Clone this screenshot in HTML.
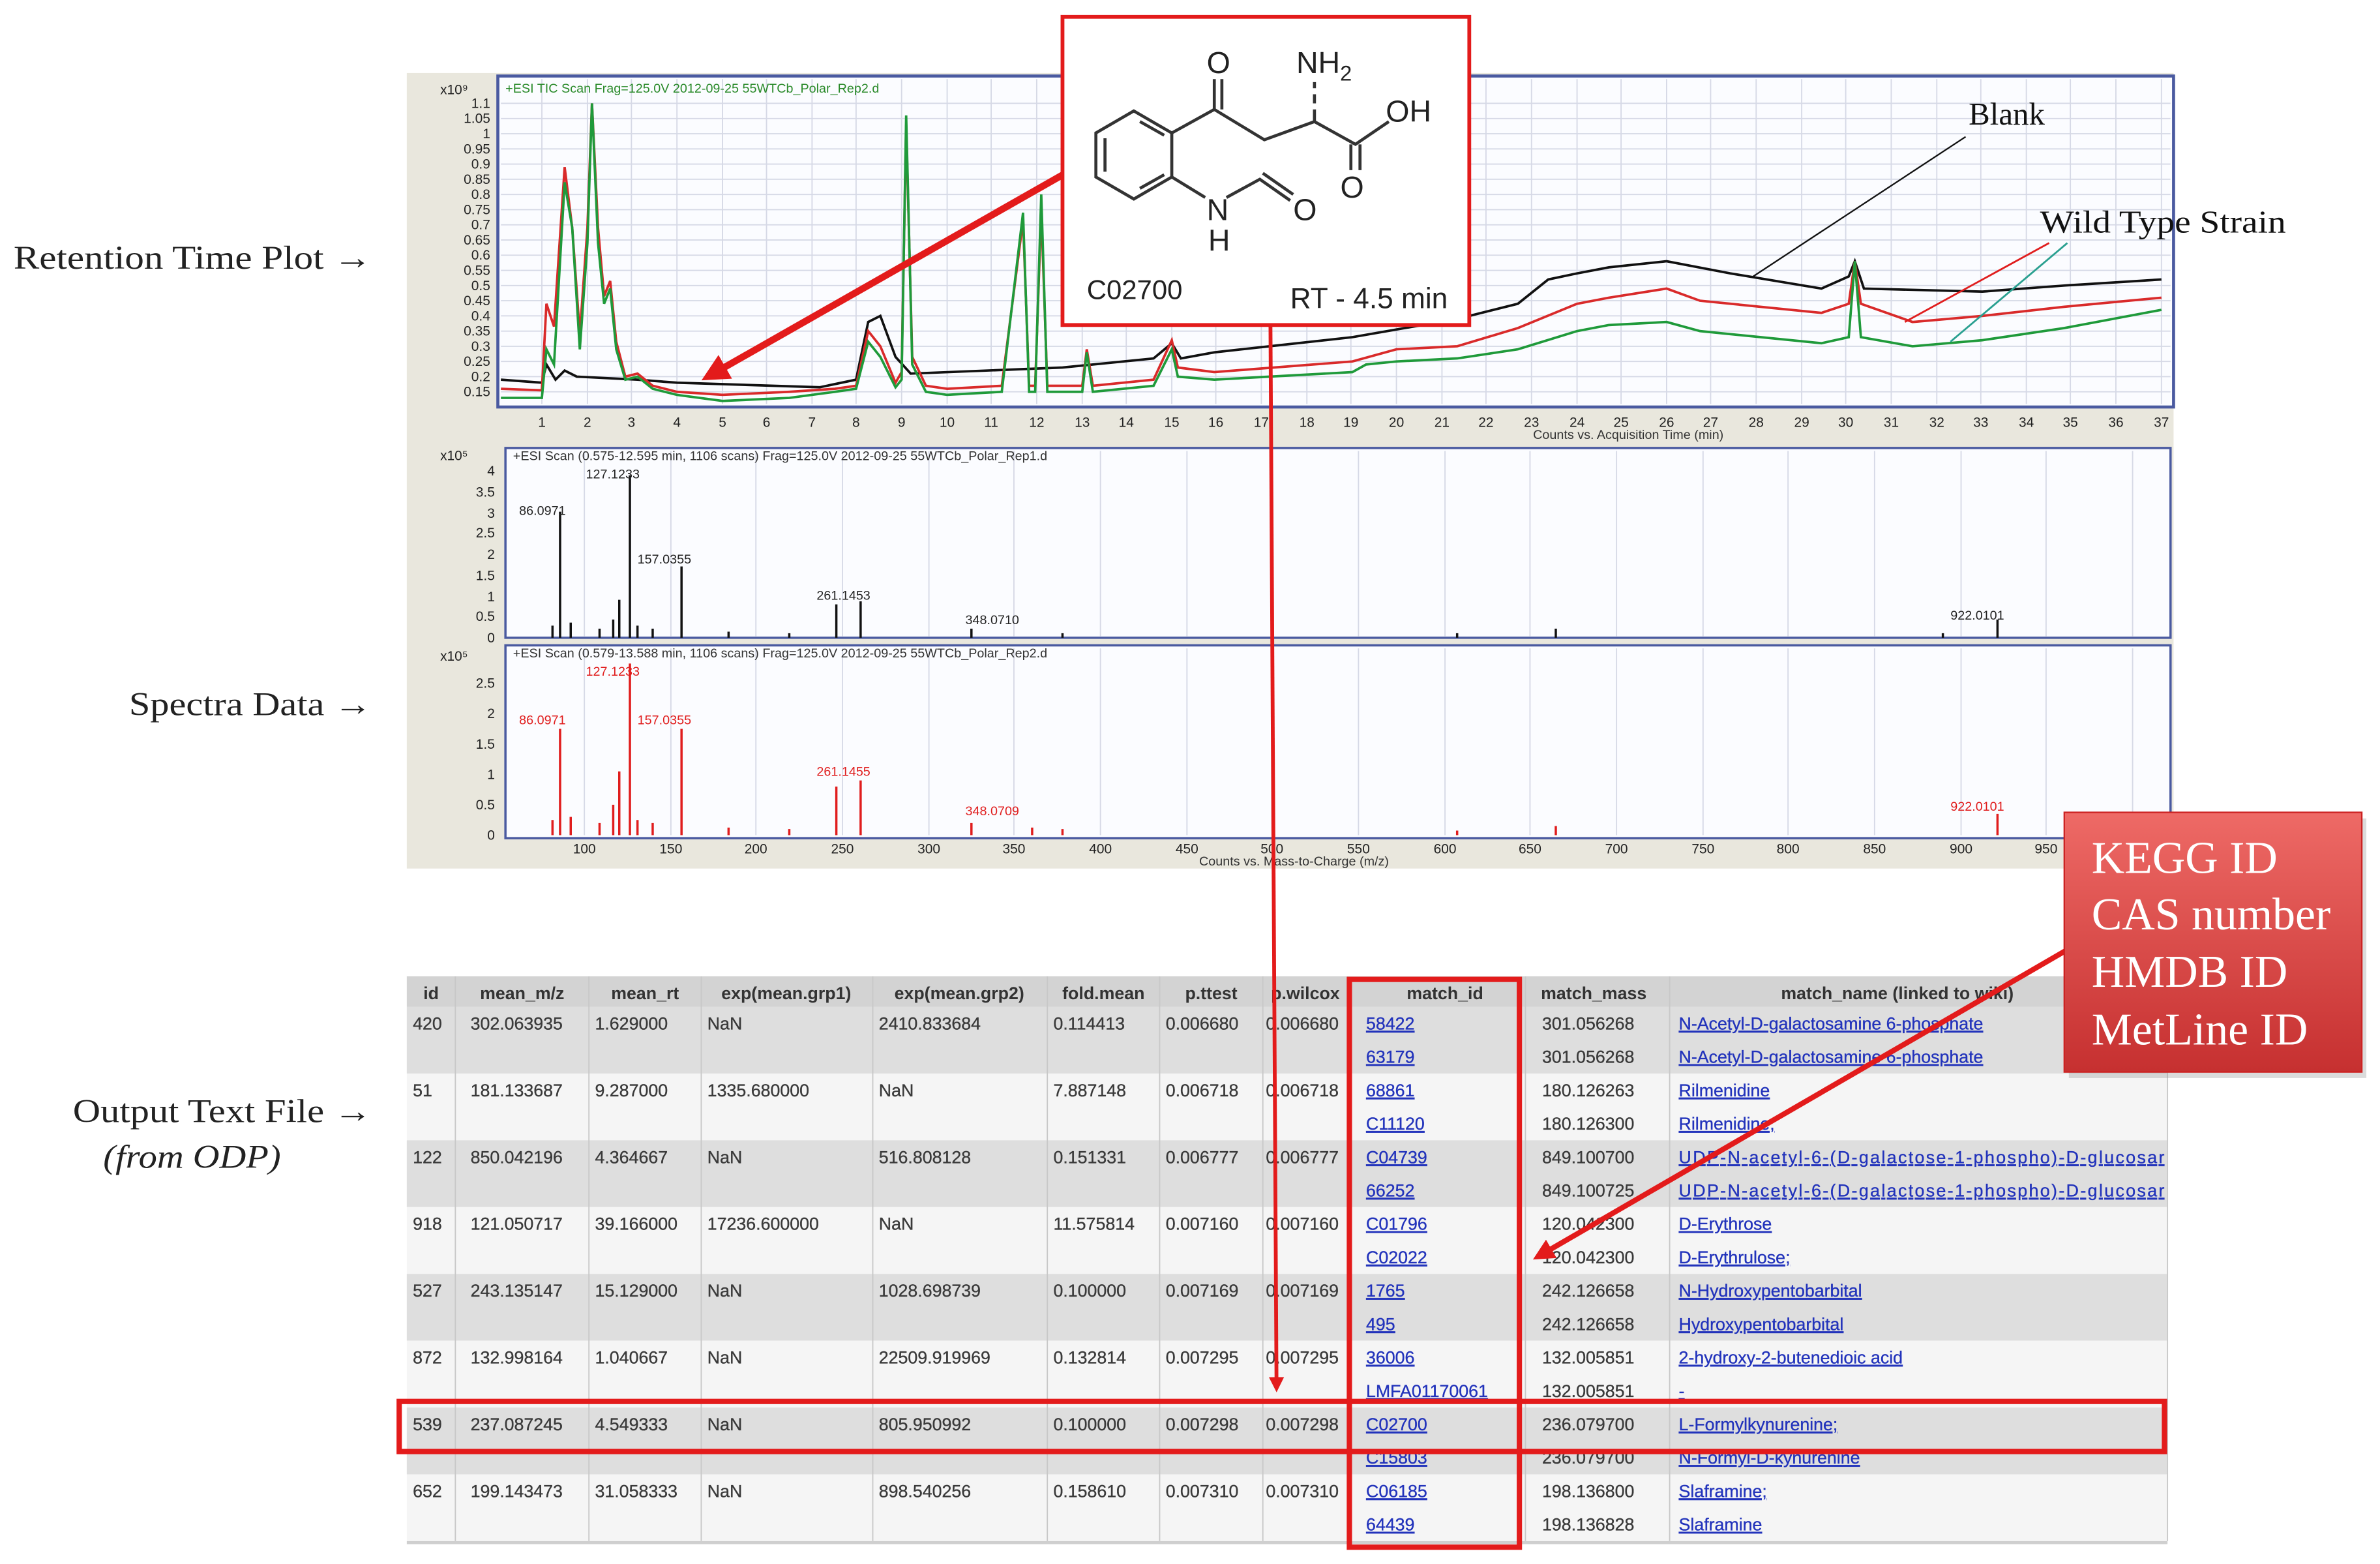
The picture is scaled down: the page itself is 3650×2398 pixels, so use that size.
<!DOCTYPE html>
<html><head><meta charset="utf-8"><style>
html,body{margin:0;padding:0;background:#fff;}
svg{display:block;}
.lab{font-family:"Liberation Serif",serif;font-size:22px;fill:#222;}
.t{font-family:"Liberation Sans",sans-serif;font-size:11.5px;fill:#3a3a3a;stroke:#3a3a3a;stroke-width:0.15px;}
.h{font-family:"Liberation Sans",sans-serif;font-size:11.5px;fill:#333;font-weight:bold;}
.a{fill:#2233bb;stroke:#2233bb;text-decoration:underline;}
.ax{font-family:"Liberation Sans",sans-serif;font-size:9px;fill:#222;}
.sm{font-family:"Liberation Sans",sans-serif;font-size:8.5px;}
.k{font-family:"Liberation Serif",serif;font-size:30px;fill:#fff;}
</style></head><body>
<svg width="3650" height="2398" viewBox="0 0 1568 1030" xmlns="http://www.w3.org/2000/svg">
<defs>
<linearGradient id="kg" x1="0" y1="0" x2="0" y2="1"><stop offset="0" stop-color="#ee6a66"/><stop offset="1" stop-color="#c63030"/></linearGradient>
<marker id="ar" markerWidth="4" markerHeight="4" refX="2" refY="2" orient="auto"><path d="M0,0 L4,2 L0,4 z" fill="#e31b1b"/></marker>
</defs>
<rect width="1568" height="1030" fill="#fff"/>

<!-- left labels -->
<text class="lab" x="9" y="177" textLength="236" lengthAdjust="spacingAndGlyphs">Retention Time Plot →</text>
<text class="lab" x="85" y="471" textLength="160" lengthAdjust="spacingAndGlyphs">Spectra Data →</text>
<text class="lab" x="48" y="739" textLength="197" lengthAdjust="spacingAndGlyphs">Output Text File →</text>
<text class="lab" x="68" y="769" font-style="italic" textLength="117" lengthAdjust="spacingAndGlyphs">(from ODP)</text>

<!-- chart panel -->
<rect x="268" y="48" width="1164" height="524" fill="#e9e7dd"/>
<rect x="328" y="50" width="1104" height="218" fill="#fbfcff" stroke="#4a5aa0" stroke-width="2"/>
<g stroke="#d6d9e6" stroke-width="0.8">
<path d="M357,52V266M387,52V266M416,52V266M446,52V266M476,52V266M505,52V266M535,52V266M564,52V266M594,52V266M624,52V266M653,52V266M683,52V266M713,52V266M742,52V266M772,52V266M801,52V266M831,52V266M861,52V266M890,52V266M920,52V266M950,52V266M979,52V266M1009,52V266M1039,52V266M1068,52V266M1098,52V266M1127,52V266M1157,52V266M1187,52V266M1216,52V266M1246,52V266M1276,52V266M1305,52V266M1335,52V266M1364,52V266M1394,52V266M1424,52V266"/>
<path d="M330,68H1430M330,78H1430M330,88H1430M330,98H1430M330,108H1430M330,118H1430M330,128H1430M330,138H1430M330,148H1430M330,158H1430M330,168H1430M330,178H1430M330,188H1430M330,198H1430M330,208H1430M330,218H1430M330,228H1430M330,238H1430M330,248H1430M330,258H1430"/>
</g>
<text class="sm" x="333" y="61" fill="#2a8a2a">+ESI TIC Scan Frag=125.0V 2012-09-25 55WTCb_Polar_Rep2.d</text>
<text class="ax" x="290" y="62">x10⁹</text>
<g class="ax" text-anchor="end">
<text x="323" y="71">1.1</text><text x="323" y="81">1.05</text><text x="323" y="91">1</text><text x="323" y="101">0.95</text><text x="323" y="111">0.9</text><text x="323" y="121">0.85</text><text x="323" y="131">0.8</text><text x="323" y="141">0.75</text><text x="323" y="151">0.7</text><text x="323" y="161">0.65</text><text x="323" y="171">0.6</text><text x="323" y="181">0.55</text><text x="323" y="191">0.5</text><text x="323" y="201">0.45</text><text x="323" y="211">0.4</text><text x="323" y="221">0.35</text><text x="323" y="231">0.3</text><text x="323" y="241">0.25</text><text x="323" y="251">0.2</text><text x="323" y="261">0.15</text>
</g>
<g class="ax" text-anchor="middle">
<text x="357" y="281">1</text><text x="387" y="281">2</text><text x="416" y="281">3</text><text x="446" y="281">4</text><text x="476" y="281">5</text><text x="505" y="281">6</text><text x="535" y="281">7</text><text x="564" y="281">8</text><text x="594" y="281">9</text><text x="624" y="281">10</text><text x="653" y="281">11</text><text x="683" y="281">12</text><text x="713" y="281">13</text><text x="742" y="281">14</text><text x="772" y="281">15</text><text x="801" y="281">16</text><text x="831" y="281">17</text><text x="861" y="281">18</text><text x="890" y="281">19</text><text x="920" y="281">20</text><text x="950" y="281">21</text><text x="979" y="281">22</text><text x="1009" y="281">23</text><text x="1039" y="281">24</text><text x="1068" y="281">25</text><text x="1098" y="281">26</text><text x="1127" y="281">27</text><text x="1157" y="281">28</text><text x="1187" y="281">29</text><text x="1216" y="281">30</text><text x="1246" y="281">31</text><text x="1276" y="281">32</text><text x="1305" y="281">33</text><text x="1335" y="281">34</text><text x="1364" y="281">35</text><text x="1394" y="281">36</text><text x="1424" y="281">37</text>
</g>
<text class="sm" x="1010" y="289" fill="#333">Counts vs. Acquisition Time (min)</text>

<g fill="none" stroke-width="1.6">
<path stroke="#111" d="M330,250 L357,252 L360,240 L366,250 L372,244 L380,248 L420,250 L446,252 L540,255 L564,250 L572,212 L580,208 L590,235 L600,246 L700,242 L760,236 L772,226 L778,236 L800,232 L891,222 L960,210 L1000,200 L1020,184 L1039,180 L1060,176 L1098,172 L1140,180 L1200,190 L1218,182 L1222,172 L1228,190 L1306,192 L1360,188 L1424,184"/>
<path stroke="#d92a2a" d="M330,256 L357,257 L360,200 L365,215 L372,110 L377,150 L382,220 L387,150 L390,68 L394,150 L398,195 L402,185 L406,225 L412,248 L420,246 L430,254 L446,258 L476,260 L520,258 L550,256 L564,254 L572,218 L580,228 L590,252 L594,245 L597,82 L601,235 L610,254 L624,256 L660,254 L674,145 L678,254 L682,254 L686,138 L690,254 L713,254 L716,230 L720,254 L760,250 L772,224 L776,242 L800,245 L891,238 L920,230 L960,228 L1000,216 L1039,200 L1060,196 L1098,190 L1120,198 L1200,206 L1218,200 L1222,172 L1226,200 L1260,212 L1306,208 L1360,202 L1424,196"/>
<path stroke="#1f9a3a" d="M330,262 L357,262 L360,230 L365,240 L372,120 L377,150 L382,230 L387,160 L390,68 L394,160 L398,200 L402,190 L406,230 L412,250 L420,248 L430,256 L446,260 L476,264 L520,262 L550,258 L564,256 L572,225 L580,235 L590,255 L594,250 L597,76 L601,240 L610,258 L624,260 L660,258 L674,140 L678,258 L682,258 L686,128 L690,258 L713,258 L716,232 L720,258 L760,254 L772,230 L776,248 L800,250 L891,245 L900,240 L920,238 L960,236 L1000,230 L1039,218 L1060,214 L1098,212 L1120,218 L1200,226 L1218,222 L1222,172 L1226,222 L1260,228 L1306,224 L1360,216 L1424,204"/>
</g>

<!-- spectra 1 -->
<rect x="333" y="295" width="1097" height="125" fill="#fbfcff" stroke="#4a5aa0" stroke-width="1.5"/>
<g stroke="#d6d9e6" stroke-width="0.8"><path d="M385,297V419M442,297V419M498,297V419M555,297V419M612,297V419M668,297V419M725,297V419M782,297V419M838,297V419M895,297V419M952,297V419M1008,297V419M1065,297V419M1122,297V419M1178,297V419M1235,297V419M1292,297V419M1348,297V419M1405,297V419"/></g>
<text class="sm" x="338" y="303" fill="#333">+ESI Scan (0.575-12.595 min, 1106 scans) Frag=125.0V 2012-09-25 55WTCb_Polar_Rep1.d</text>
<text class="ax" x="290" y="303">x10⁵</text>
<g class="ax" text-anchor="end"><text x="326" y="313">4</text><text x="326" y="327">3.5</text><text x="326" y="341">3</text><text x="326" y="354">2.5</text><text x="326" y="368">2</text><text x="326" y="382">1.5</text><text x="326" y="396">1</text><text x="326" y="409">0.5</text><text x="326" y="423">0</text></g>
<g stroke="#111" stroke-width="1.5"><path d="M369,420V337M415,420V313M449,420V373M551,420V398M567,420V396M408,420V395M404,420V408M376,420V410M364,420V412M395,420V414M420,420V412M430,420V414M480,420V416M520,420V417M640,420V414M1316,420V408M1280,420V417M960,420V417M1025,420V414M700,420V417"/></g>
<g class="sm" fill="#222"><text x="386" y="315">127.1233</text><text x="342" y="339">86.0971</text><text x="420" y="371">157.0355</text><text x="538" y="395">261.1453</text><text x="636" y="411">348.0710</text><text x="1285" y="408">922.0101</text></g>

<!-- spectra 2 -->
<rect x="333" y="425" width="1097" height="127" fill="#fbfcff" stroke="#4a5aa0" stroke-width="1.5"/>
<g stroke="#d6d9e6" stroke-width="0.8"><path d="M385,427V550M442,427V550M498,427V550M555,427V550M612,427V550M668,427V550M725,427V550M782,427V550M838,427V550M895,427V550M952,427V550M1008,427V550M1065,427V550M1122,427V550M1178,427V550M1235,427V550M1292,427V550M1348,427V550M1405,427V550"/></g>
<text class="sm" x="338" y="433" fill="#333">+ESI Scan (0.579-13.588 min, 1106 scans) Frag=125.0V 2012-09-25 55WTCb_Polar_Rep2.d</text>
<text class="ax" x="290" y="435">x10⁵</text>
<g class="ax" text-anchor="end"><text x="326" y="453">2.5</text><text x="326" y="473">2</text><text x="326" y="493">1.5</text><text x="326" y="513">1</text><text x="326" y="533">0.5</text><text x="326" y="553">0</text></g>
<g stroke="#e01d1d" stroke-width="1.5"><path d="M369,550V480M415,550V437M449,550V480M551,550V518M567,550V514M408,550V508M404,550V530M376,550V538M364,550V540M395,550V542M420,550V540M430,550V542M480,550V545M520,550V546M640,550V542M1316,550V536M680,550V545M700,550V546M960,550V547M1025,550V544"/></g>
<g class="sm" fill="#e01d1d"><text x="386" y="445">127.1233</text><text x="342" y="477">86.0971</text><text x="420" y="477">157.0355</text><text x="538" y="511">261.1455</text><text x="636" y="537">348.0709</text><text x="1285" y="534">922.0101</text></g>
<g class="ax" text-anchor="middle"><text x="385" y="562">100</text><text x="442" y="562">150</text><text x="498" y="562">200</text><text x="555" y="562">250</text><text x="612" y="562">300</text><text x="668" y="562">350</text><text x="725" y="562">400</text><text x="782" y="562">450</text><text x="838" y="562">500</text><text x="895" y="562">550</text><text x="952" y="562">600</text><text x="1008" y="562">650</text><text x="1065" y="562">700</text><text x="1122" y="562">750</text><text x="1178" y="562">800</text><text x="1235" y="562">850</text><text x="1292" y="562">900</text><text x="1348" y="562">950</text></g>
<text class="sm" x="790" y="570" fill="#333">Counts vs. Mass-to-Charge (m/z)</text>

<!-- annotations Blank / Wild type -->
<text x="1297" y="82" font-family="Liberation Serif,serif" font-size="21" fill="#111">Blank</text>
<path d="M1295,90 L1155,182" stroke="#111" stroke-width="1"/>
<text x="1344" y="153" font-family="Liberation Serif,serif" font-size="21" fill="#111" textLength="162" lengthAdjust="spacingAndGlyphs">Wild Type Strain</text>
<path d="M1350,160 L1255,212" stroke="#e01d1d" stroke-width="1.2"/>
<path d="M1362,160 L1285,225" stroke="#2aa090" stroke-width="1.2"/>

<!-- table -->
<rect x="268" y="643" width="1160" height="20" fill="#d3d3d3"/>
<rect x="268" y="663" width="1160" height="44" fill="#dedede"/>
<rect x="268" y="707" width="1160" height="44" fill="#f5f5f5"/>
<rect x="268" y="751" width="1160" height="44" fill="#dedede"/>
<rect x="268" y="795" width="1160" height="44" fill="#f5f5f5"/>
<rect x="268" y="839" width="1160" height="44" fill="#dedede"/>
<rect x="268" y="883" width="1160" height="44" fill="#f5f5f5"/>
<rect x="268" y="927" width="1160" height="44" fill="#dedede"/>
<rect x="268" y="971" width="1160" height="44" fill="#f5f5f5"/>
<rect x="268" y="1015" width="1160" height="2" fill="#cfcfcf"/>
<g stroke="#c8c8c8" stroke-width="0.8"><path d="M300,643V1015M388,643V1015M462,643V1015M575,643V1015M690,643V1015M764,643V1015M832,643V1015M888,643V1015M1005,643V1015M1100,643V1015M1428,643V1015"/></g>
<g class="h" text-anchor="middle">
<text x="284" y="658">id</text><text x="344" y="658">mean_m/z</text><text x="425" y="658">mean_rt</text><text x="518" y="658">exp(mean.grp1)</text><text x="632" y="658">exp(mean.grp2)</text><text x="727" y="658">fold.mean</text><text x="798" y="658">p.ttest</text><text x="860" y="658">p.wilcox</text><text x="952" y="658">match_id</text><text x="1050" y="658">match_mass</text><text x="1250" y="658">match_name (linked to wiki)</text>
</g>
<g class="t">
<text x="272" y="678">420</text><text x="310" y="678">302.063935</text><text x="392" y="678">1.629000</text><text x="466" y="678">NaN</text><text x="579" y="678">2410.833684</text><text x="694" y="678">0.114413</text><text x="768" y="678">0.006680</text><text x="834" y="678">0.006680</text>
<text x="272" y="722">51</text><text x="310" y="722">181.133687</text><text x="392" y="722">9.287000</text><text x="466" y="722">1335.680000</text><text x="579" y="722">NaN</text><text x="694" y="722">7.887148</text><text x="768" y="722">0.006718</text><text x="834" y="722">0.006718</text>
<text x="272" y="766">122</text><text x="310" y="766">850.042196</text><text x="392" y="766">4.364667</text><text x="466" y="766">NaN</text><text x="579" y="766">516.808128</text><text x="694" y="766">0.151331</text><text x="768" y="766">0.006777</text><text x="834" y="766">0.006777</text>
<text x="272" y="810">918</text><text x="310" y="810">121.050717</text><text x="392" y="810">39.166000</text><text x="466" y="810">17236.600000</text><text x="579" y="810">NaN</text><text x="694" y="810">11.575814</text><text x="768" y="810">0.007160</text><text x="834" y="810">0.007160</text>
<text x="272" y="854">527</text><text x="310" y="854">243.135147</text><text x="392" y="854">15.129000</text><text x="466" y="854">NaN</text><text x="579" y="854">1028.698739</text><text x="694" y="854">0.100000</text><text x="768" y="854">0.007169</text><text x="834" y="854">0.007169</text>
<text x="272" y="898">872</text><text x="310" y="898">132.998164</text><text x="392" y="898">1.040667</text><text x="466" y="898">NaN</text><text x="579" y="898">22509.919969</text><text x="694" y="898">0.132814</text><text x="768" y="898">0.007295</text><text x="834" y="898">0.007295</text>
<text x="272" y="942">539</text><text x="310" y="942">237.087245</text><text x="392" y="942">4.549333</text><text x="466" y="942">NaN</text><text x="579" y="942">805.950992</text><text x="694" y="942">0.100000</text><text x="768" y="942">0.007298</text><text x="834" y="942">0.007298</text>
<text x="272" y="986">652</text><text x="310" y="986">199.143473</text><text x="392" y="986">31.058333</text><text x="466" y="986">NaN</text><text x="579" y="986">898.540256</text><text x="694" y="986">0.158610</text><text x="768" y="986">0.007310</text><text x="834" y="986">0.007310</text>
</g>
<g class="t">
<text class="t a" x="900" y="678">58422</text><text class="t a" x="900" y="700">63179</text>
<text class="t a" x="900" y="722">68861</text><text class="t a" x="900" y="744">C11120</text>
<text class="t a" x="900" y="766">C04739</text><text class="t a" x="900" y="788">66252</text>
<text class="t a" x="900" y="810">C01796</text><text class="t a" x="900" y="832">C02022</text>
<text class="t a" x="900" y="854">1765</text><text class="t a" x="900" y="876">495</text>
<text class="t a" x="900" y="898">36006</text><text class="t a" x="900" y="920">LMFA01170061</text>
<text class="t a" x="900" y="942">C02700</text><text class="t a" x="900" y="964">C15803</text>
<text class="t a" x="900" y="986">C06185</text><text class="t a" x="900" y="1008">64439</text>
<text x="1016" y="678">301.056268</text><text x="1016" y="700">301.056268</text>
<text x="1016" y="722">180.126263</text><text x="1016" y="744">180.126300</text>
<text x="1016" y="766">849.100700</text><text x="1016" y="788">849.100725</text>
<text x="1016" y="810">120.042300</text><text x="1016" y="832">120.042300</text>
<text x="1016" y="854">242.126658</text><text x="1016" y="876">242.126658</text>
<text x="1016" y="898">132.005851</text><text x="1016" y="920">132.005851</text>
<text x="1016" y="942">236.079700</text><text x="1016" y="964">236.079700</text>
<text x="1016" y="986">198.136800</text><text x="1016" y="1008">198.136828</text>
<text class="t a" x="1106" y="678">N-Acetyl-D-galactosamine 6-phosphate</text><text class="t a" x="1106" y="700">N-Acetyl-D-galactosamine 6-phosphate</text>
<text class="t a" x="1106" y="722">Rilmenidine</text><text class="t a" x="1106" y="744">Rilmenidine;</text>
<text class="t a" x="1106" y="766" textLength="320">UDP-N-acetyl-6-(D-galactose-1-phospho)-D-glucosar</text><text class="t a" x="1106" y="788" textLength="320">UDP-N-acetyl-6-(D-galactose-1-phospho)-D-glucosar</text>
<text class="t a" x="1106" y="810">D-Erythrose</text><text class="t a" x="1106" y="832">D-Erythrulose;</text>
<text class="t a" x="1106" y="854">N-Hydroxypentobarbital</text><text class="t a" x="1106" y="876">Hydroxypentobarbital</text>
<text class="t a" x="1106" y="898">2-hydroxy-2-butenedioic acid</text><text class="t a" x="1106" y="920">-</text>
<text class="t a" x="1106" y="942">L-Formylkynurenine;</text><text class="t a" x="1106" y="964">N-Formyl-D-kynurenine</text>
<text class="t a" x="1106" y="986">Slaframine;</text><text class="t a" x="1106" y="1008">Slaframine</text>
</g>

<!-- red highlights -->
<rect x="263" y="923" width="1163" height="33" fill="none" stroke="#e31b1b" stroke-width="3.5"/>
<rect x="889" y="645" width="112" height="374" fill="none" stroke="#e31b1b" stroke-width="3.5"/>

<!-- arrows -->
<path d="M702,114 L470,246" stroke="#e31b1b" stroke-width="4.5" marker-end="url(#ar)"/>
<path d="M837,212 L841,912" stroke="#e31b1b" stroke-width="2.5" marker-end="url(#ar)"/>
<path d="M1368,622 L1016,826" stroke="#e31b1b" stroke-width="3.5" marker-end="url(#ar)"/>

<!-- molecule box -->
<rect x="700" y="11" width="268" height="203" fill="#fff" stroke="#e31b1b" stroke-width="2.5"/>
<g fill="none" stroke="#333" stroke-width="2">
<path d="M747,73 L772,87.5 L772,116.5 L747,131 L722,116.5 L722,87.5 Z"/>
<path d="M728,91 V113 M751,80 L767,89 M751,124 L767,115"/>
<path d="M772,87.5 L800,72 L833,92 L866,80 L893,95 L915,80"/>
<path d="M800,72 V52 M805,72 V52"/>
<path d="M890,95 V112 M896,95 V112"/>
<path d="M866,80 V72 M866,68 V62 M866,58 V54"/>
<path d="M772,116.5 L794,130 M808,130 L830,118 L850,132 M832,114 L852,128"/>
</g>
<g font-family="Liberation Sans,sans-serif" font-size="20" fill="#222">
<text x="795" y="48">O</text>
<text x="854" y="48">NH<tspan font-size="14" dy="5">2</tspan></text>
<text x="913" y="80">OH</text>
<text x="883" y="130">O</text>
<text x="795" y="145">N</text>
<text x="796" y="165">H</text>
<text x="852" y="145">O</text>
<text x="716" y="197" font-size="18">C02700</text>
<text x="850" y="203" font-size="19">RT - 4.5 min</text>
</g>

<!-- KEGG box -->
<rect x="1363" y="539" width="196" height="171" fill="#999" opacity="0.35"/>
<rect x="1360" y="535" width="196" height="171" fill="url(#kg)" stroke="#c22" stroke-width="1"/>
<text class="k" x="1378" y="575">KEGG ID</text>
<text class="k" x="1378" y="612">CAS number</text>
<text class="k" x="1378" y="650">HMDB ID</text>
<text class="k" x="1378" y="688">MetLine ID</text>
</svg>
</body></html>
